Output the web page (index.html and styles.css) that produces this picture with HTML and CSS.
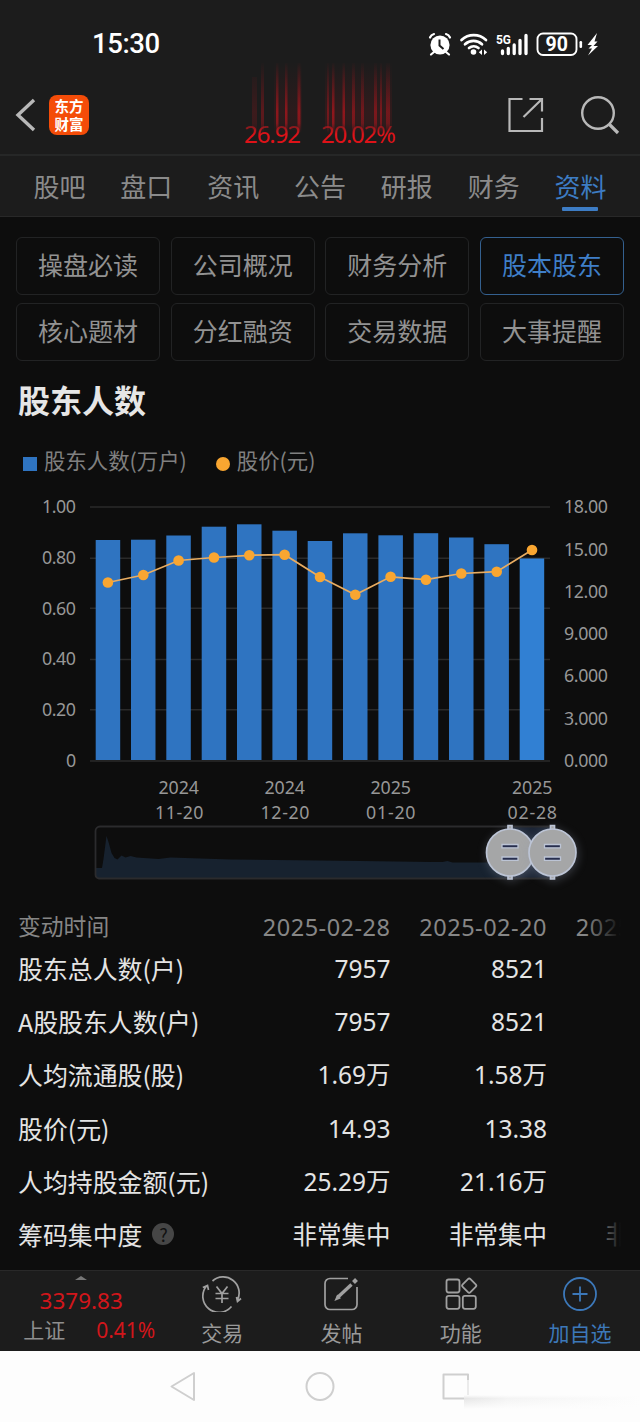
FILE: index.html
```html
<!DOCTYPE html>
<html lang="zh-CN">
<head>
    <meta charset="UTF-8">
    <meta name="viewport" content="width=device-width, initial-scale=1.0">
    <title>股东人数</title>
    <link rel="stylesheet" href="styles.css">
</head>
<body>
    <!-- Status bar -->
    <div class="status-bar">
        <span class="clock">15:30</span>
        <svg class="status-icons" width="172" height="28" viewBox="428 29 172 28">
            <g fill="#fff">
                <circle cx="440" cy="44" r="9.600"/>
                <path d="M434 51l-3 2.500M446 51l3 2.500M430 36.500a6 6 0 0 1 4-3.500M450 36.500a6 6 0 0 0-4-3.500" fill="none" stroke="#fff" stroke-width="2.200" stroke-linecap="round"/>
                <path d="M439.500 38.500v6l4 3.500" fill="none" stroke="#1c1c1c" stroke-width="2"/>
                <g fill="none" stroke="#fff" stroke-width="2.700" stroke-linecap="round">
                    <path d="M461.500 39a18 18 0 0 1 24.500 0"/>
                    <path d="M465 43.300a12.500 12.500 0 0 1 17 0"/>
                    <path d="M469 47a7.500 7.500 0 0 1 9.500 0"/>
                </g>
                <circle cx="473.500" cy="51" r="2.800"/>
                <path d="M482 48.500v5.500l-3.200-2.700zM484 48.500v5.500l3.200-2.700z"/>
                <text x="496" y="42.500" font-size="13.500" font-weight="bold" textLength="15" lengthAdjust="spacingAndGlyphs">5G</text>
                <g stroke="#fff" stroke-width="3.300" stroke-linecap="round">
                    <path d="M502.500 50v2.500M508.300 47.500v5M514.200 44v8.500M520 39.500v13M526 34.500v18"/>
                </g>
                <rect x="537.500" y="32.500" width="39" height="21.500" rx="5.500" fill="none" stroke="#fff" stroke-width="1.900"/>
                <text x="545.500" y="50" font-size="19.500" font-weight="bold" textLength="22.500">90</text>
                <rect x="579.500" y="40" width="2.600" height="7" rx="1.200"/>
                <path d="M597 32l-9.500 12h4.500l-3.500 3.500h3.500l-4 7 10-9.500h-4.500l4-4.500h-3z"/>
            </g>
        </svg>
    </div>

    <!-- Header -->
    <header class="header">
        <svg class="back" width="22" height="34" viewBox="0 0 22 34"><path d="M19 2 3 17 19 32" fill="none" stroke="#b8b8b8" stroke-width="3.400"/></svg>
        <div class="logo">东方<br>财富</div>
        <svg class="quote" width="160" height="94" viewBox="240 62 160 94">
            <defs>
                <linearGradient id="trail" gradientUnits="userSpaceOnUse" x1="0" y1="64" x2="0" y2="134">
                    <stop offset="0" stop-color="#c0141c" stop-opacity="0.020"/>
                    <stop offset="0.700" stop-color="#c0141c" stop-opacity="0.650"/>
                    <stop offset="0.860" stop-color="#c0141c" stop-opacity="0.600"/>
                    <stop offset="1" stop-color="#c0141c" stop-opacity="0"/>
                </linearGradient>
                <linearGradient id="digits" gradientUnits="userSpaceOnUse" x1="0" y1="125" x2="0" y2="135">
                    <stop offset="0" stop-color="#b51a20" stop-opacity="0.500"/>
                    <stop offset="1" stop-color="#df1218"/>
                </linearGradient>
            </defs>
            <g fill="url(#trail)">
                <rect x="252" y="78" width="5" height="55" opacity="0.300"/>
                <rect x="261" y="64" width="3" height="70" opacity="0.600"/>
                <rect x="276" y="64" width="2.500" height="70"/>
                <rect x="285" y="64" width="2.500" height="70"/>
                <rect x="297.500" y="64" width="3" height="70"/>
                <rect x="274" y="64" width="28" height="70" opacity="0.150"/>
                <rect x="327" y="64" width="2" height="70" opacity="0.700"/>
                <rect x="332" y="64" width="2.500" height="70"/>
                <rect x="342.500" y="64" width="2.500" height="70"/>
                <rect x="352" y="64" width="3" height="70" opacity="0.800"/>
                <rect x="361" y="64" width="3" height="70" opacity="0.700"/>
                <rect x="374" y="64" width="3" height="70" opacity="0.800"/>
                <rect x="380" y="64" width="2" height="70" opacity="0.800"/>
                <rect x="386" y="64" width="4" height="70" opacity="0.700"/>
                <rect x="325" y="64" width="67" height="70" opacity="0.200"/>
            </g>
            <g fill="url(#digits)" font-size="24">
                <text x="244" y="144" textLength="57">26.92</text>
                <text x="321" y="144" textLength="75">20.02%</text>
            </g>
        </svg>
        <svg class="share" width="36" height="36" viewBox="0 0 36 36"><path d="M14.500 2H1.500v32H34V21M21.500 2H34v12.500M34 2 15.500 20" fill="none" stroke="#b8b8b8" stroke-width="2.200"/></svg>
        <svg class="search" width="40" height="40" viewBox="0 0 40 40"><circle cx="18" cy="18" r="15.800" fill="none" stroke="#b8b8b8" stroke-width="2.400"/><path d="M29 29 38 38" stroke="#b8b8b8" stroke-width="3.200"/></svg>
    </header>

    <!-- Tabs -->
    <nav class="tabs">
        <a>股吧</a>
        <a>盘口</a>
        <a>资讯</a>
        <a>公告</a>
        <a>研报</a>
        <a>财务</a>
        <a class="active">资料</a>
    </nav>

    <main class="content">
        <div class="menu">
            <a>操盘必读</a>
            <a>公司概况</a>
            <a>财务分析</a>
            <a class="active">股本股东</a>
            <a>核心题材</a>
            <a>分红融资</a>
            <a>交易数据</a>
            <a>大事提醒</a>
        </div>

        <h1>股东人数</h1>

        <div class="legend">
            <i class="square"></i><span>股东人数(万户)</span>
            <i class="dot"></i><span>股价(元)</span>
        </div>

        <!-- Chart: bars, price line and range slider -->
        <svg class="chart" width="640" height="400" viewBox="0 490 640 400">
            <path d="M90 507H550M90 558.300H550M90 608.300H550M90 659.500H550M90 709.700H550M90 761H550" stroke="#2a2a2a" stroke-width="1.500"/>
            <g fill="#2f74c1">
                <rect x="95.700" y="540" width="24.500" height="220"/>
                <rect x="131" y="539.700" width="24.500" height="220.300"/>
                <rect x="166.300" y="535.500" width="24.500" height="224.500"/>
                <rect x="201.700" y="526.700" width="24.500" height="233.300"/>
                <rect x="237" y="524.300" width="24.500" height="235.700"/>
                <rect x="272.400" y="530.700" width="24.500" height="229.300"/>
                <rect x="307.700" y="541" width="24.500" height="219"/>
                <rect x="343" y="533.300" width="24.500" height="226.700"/>
                <rect x="378.400" y="535.300" width="24.500" height="224.700"/>
                <rect x="413.700" y="533.200" width="24.500" height="226.800"/>
                <rect x="449" y="537.500" width="24.500" height="222.500"/>
                <rect x="484.400" y="544.200" width="24.500" height="215.800"/>
                <rect x="519.700" y="558.500" width="24.500" height="201.500" fill="#3180d3"/>
            </g>
            <polyline points="107.900,582.500 143.300,575 178.600,560.500 214,557.500 249.300,555.300 284.600,554.700 320,577 355.300,594.800 390.600,576.800 426,579.700 461.300,573.500 496.700,571.700 532,550" fill="none" stroke="#e9ad62" stroke-width="1.700"/>
            <g fill="#f9a631">
                <circle cx="107.900" cy="582.500" r="5.300"/>
                <circle cx="143.300" cy="575" r="5.300"/>
                <circle cx="178.600" cy="560.500" r="5.300"/>
                <circle cx="214" cy="557.500" r="5.300"/>
                <circle cx="249.300" cy="555.300" r="5.300"/>
                <circle cx="284.600" cy="554.700" r="5.300"/>
                <circle cx="320" cy="577" r="5.300"/>
                <circle cx="355.300" cy="594.800" r="5.300"/>
                <circle cx="390.600" cy="576.800" r="5.300"/>
                <circle cx="426" cy="579.700" r="5.300"/>
                <circle cx="461.300" cy="573.500" r="5.300"/>
                <circle cx="496.700" cy="571.700" r="5.300"/>
                <circle cx="532" cy="550" r="5.300"/>
            </g>
            <g class="axis">
                <text x="42" y="513.300" textLength="34">1.00</text>
                <text x="42" y="564" textLength="34">0.80</text>
                <text x="42" y="614.500" textLength="34">0.60</text>
                <text x="42" y="665.300" textLength="34">0.40</text>
                <text x="42" y="716" textLength="34">0.20</text>
                <text x="66" y="767">0</text>
                <text x="564" y="513.300" textLength="44">18.00</text>
                <text x="564" y="555.500" textLength="44">15.00</text>
                <text x="564" y="597.500" textLength="44">12.00</text>
                <text x="564" y="640" textLength="44">9.000</text>
                <text x="564" y="682.300" textLength="44">6.000</text>
                <text x="564" y="724.500" textLength="44">3.000</text>
                <text x="564" y="767" textLength="44">0.000</text>
                <text x="158.500" y="793.500" textLength="40.500">2024</text>
                <text x="155" y="818.500" textLength="48.500">11-20</text>
                <text x="264.500" y="793.500" textLength="40.500">2024</text>
                <text x="260.500" y="818.500" textLength="49">12-20</text>
                <text x="370.500" y="793.500" textLength="40.500">2025</text>
                <text x="366" y="818.500" textLength="49.500">01-20</text>
                <text x="512" y="793.500" textLength="40.500">2025</text>
                <text x="507.500" y="818.500" textLength="49.500">02-28</text>
            </g>
            <path d="M96 878V868h6l1.500-9 3-23 2 6 3 11 3 5 3 1.500 4-4 4 2 5-1.500 6 1.500 22 1.500 12-1.500 60 2 130 1.500 71 1h11l5-1 5 1.500h57V878z" fill="#17222f"/>
            <rect x="510" y="827" width="42" height="51" fill="#1d2636"/>
            <path d="M552 878.500H99a4 4 0 0 1-3.500-4V831a4.500 4.500 0 0 1 4.500-4.500H552" fill="none" stroke="#2b2b2d" stroke-width="1.800"/>
            <g class="handle" fill="#a5a6a7" stroke="#bcc4d5" stroke-width="1.700">
                <path d="M508 825.500h4v53.500h-4z"/>
                <circle cx="510" cy="852.500" r="23.500"/>
                <path d="M502 844.500h16v3.300h-16zM502 857h16v3.300h-16z" fill="#272e4d" stroke-width="1.300"/>
            </g>
            <g class="handle" fill="#a5a6a7" stroke="#bcc4d5" stroke-width="1.700">
                <path d="M550.500 825.500h4v53.500h-4z"/>
                <circle cx="552.500" cy="852.500" r="23.500"/>
                <path d="M544.500 844.500h16v3.300h-16zM544.500 857h16v3.300h-16z" fill="#272e4d" stroke-width="1.300"/>
            </g>
        </svg>

        <!-- Holder table -->
        <div class="table">
            <div class="row head"><b>变动时间</b><span>2025-02-28</span><span>2025-02-20</span><span>2025-02-10</span></div>
            <div class="row"><b>股东总人数(户)</b><span>7957</span><span>8521</span></div>
            <div class="row"><b>A股股东人数(户)</b><span>7957</span><span>8521</span></div>
            <div class="row"><b>人均流通股(股)</b><span>1.69万</span><span>1.58万</span></div>
            <div class="row"><b>股价(元)</b><span>14.93</span><span>13.38</span></div>
            <div class="row"><b>人均持股金额(元)</b><span>25.29万</span><span>21.16万</span></div>
            <div class="row"><b>筹码集中度<i class="help">?</i></b><span>非常集中</span><span>非常集中</span><span>非常集中</span></div>
        </div>
    </main>

    <!-- Bottom bar -->
    <footer class="bottom-bar">
        <div class="index">
            <i class="arrow"></i>
            <strong>3379.83</strong>
            <div><span>上证</span><em>0.41%</em></div>
        </div>
        <a>
            <svg width="40" height="36" viewBox="0 0 40 36" fill="none" stroke="#a0a0a0" stroke-width="1.700">
                <path d="M10.500 5A16 16 0 0 1 35.500 24M29.500 30.500A16 16 0 0 1 4.500 10M0.800 11.500 5.500 9.500 6.500 14M39 22.500 35.500 25.500 34.500 21"/>
                <path d="M14.500 10.500 20 17.500 25.500 10.500M13.500 17.500h13M13.500 22.500h13M20 17.500v9.500"/>
            </svg>
            <span>交易</span>
        </a>
        <a>
            <svg width="36" height="36" viewBox="0 0 36 36" fill="none" stroke="#a0a0a0" stroke-width="1.700">
                <path d="M25 2.500H7A5 5 0 0 0 2 7.500v21a5 5 0 0 0 5 5h22a5 5 0 0 0 5-5V11"/>
                <path d="M14.500 21.500 28.500 8.500" stroke-width="3.400"/><path d="M30.500 6.500l3-3" stroke-width="4"/>
                <path d="M13 23.500l3.500-1.500-2-2z" fill="#a0a0a0"/>
            </svg>
            <span>发帖</span>
        </a>
        <a>
            <svg width="36" height="36" viewBox="0 0 36 36" fill="none" stroke="#a0a0a0" stroke-width="1.800">
                <rect x="3.500" y="3.500" width="13" height="13" rx="2.200"/><rect x="3.500" y="19.800" width="13" height="13" rx="2.200"/>
                <rect x="19.800" y="19.800" width="13" height="13" rx="2.200"/><rect x="20.700" y="4.200" width="11" height="11" rx="1.800" transform="rotate(45 26.200 9.700)"/>
            </svg>
            <span>功能</span>
        </a>
        <a class="add">
            <svg width="36" height="36" viewBox="0 0 36 36" fill="none" stroke="#3c78b9" stroke-width="1.800"><circle cx="18" cy="18" r="16"/><path d="M10.500 18h15M18 10.500v15"/></svg>
            <span>加自选</span>
        </a>
    </footer>

    <!-- System navigation -->
    <svg class="system-nav" width="640" height="71" viewBox="0 1351 640 71">
        <defs>
            <linearGradient id="edge" x1="0" y1="0" x2="1" y2="0"><stop offset="0" stop-color="#e6e6e6"/><stop offset="0.250" stop-color="#f4f4f4"/><stop offset="1" stop-color="#fdfdfd"/></linearGradient>
            <linearGradient id="down" x1="0" y1="0" x2="0" y2="1"><stop offset="0" stop-color="#fdfdfd"/><stop offset="0.250" stop-color="#fdfdfd" stop-opacity="0"/><stop offset="1" stop-color="#fdfdfd"/></linearGradient>
        </defs>
        <g fill="none" stroke="#cfcfcf" stroke-width="2" stroke-linejoin="round">
            <path d="M194 1373v27L171.500 1386.500z"/>
            <circle cx="320" cy="1386.500" r="13.500"/>
            <path d="M468 1380V1374.500H443.500V1398.500H464"/>
            <path d="M468 1380V1397" stroke="#ebebeb"/>
        </g>
        <rect x="464" y="1395" width="176" height="14" fill="url(#edge)"/>
        <rect x="464" y="1395" width="176" height="14" fill="url(#down)"/>
    </svg>
</body>
</html>
```

FILE: styles.css
```css
* {
    box-sizing: border-box;
}

body {
    margin: 0;
    width: 640px;
    height: 1422px;
    overflow: hidden;
    background: #0d0d0d;
    color: #a0a0a0;
    font-family: "Noto Sans", "Noto Sans CJK SC", sans-serif;
}

svg {
    display: block;
    flex: none;
}

/* Status bar */
.status-bar {
    height: 76px;
    padding: 11px 40px 0 92px;
    display: flex;
    align-items: center;
    justify-content: space-between;
    background: #1c1c1c;
}

.clock {
    color: #fff;
    font-family: Roboto, sans-serif;
    font-size: 27.5px;
    font-weight: 500;
    line-height: 32px;
    letter-spacing: -0.4px;
}

.status-icons {
    font-family: Roboto, sans-serif;
}

/* Header */
.header {
    height: 80px;
    padding: 0 20px 0 15px;
    display: flex;
    align-items: center;
    background: #1c1c1c;
    border-bottom: 2px solid #262727;
}

.logo {
    width: 40px;
    height: 40px;
    margin-left: 12px;
    padding-top: 2px;
    border-radius: 8px;
    background: #f44c08;
    color: #fff;
    text-align: center;
    font-family: "Noto Sans CJK SC", sans-serif;
    font-size: 14.5px;
    font-weight: bold;
    line-height: 17.5px;
}

.quote {
    margin: -14px 0 0 151px;
}

.share {
    margin-left: 108px;
}

.search {
    margin-left: auto;
}

/* Tabs */
.tabs {
    height: 61px;
    padding: 0 16px;
    display: grid;
    grid-template-columns: repeat(7, 1fr);
    background: #1c1c1c;
    border-bottom: 1px solid #282828;
}

.tabs a {
    font-family: "Noto Sans CJK SC", sans-serif;
    font-size: 26px;
    line-height: 59px;
    text-align: center;
    color: #8b8b8b;
    position: relative;
}

.tabs .active {
    color: #3d7cc4;
}

.tabs .active::after {
    content: "";
    position: absolute;
    left: 25px;
    bottom: 5px;
    width: 36px;
    height: 4px;
    border-radius: 1px;
    background: #3d7cc4;
}

/* Content */
.content {
    height: 1053px;
    padding-top: 20px;
    overflow: hidden;
}

.menu {
    padding: 0 16px;
    display: grid;
    grid-template-columns: repeat(4, 1fr);
    gap: 8px 10.5px;
}

.menu a {
    height: 58px;
    border: 1.5px solid #222324;
    border-radius: 6px;
    font-family: "Noto Sans CJK SC", sans-serif;
    font-size: 25px;
    line-height: 52px;
    text-align: center;
    color: #929292;
}

.menu .active {
    color: #3f7fc8;
    border-color: #34608f;
}

h1 {
    margin: 14px 0 0 18px;
    font-family: "Noto Sans CJK SC", sans-serif;
    font-size: 32px;
    line-height: 48px;
    color: #e6e6e6;
}

.legend {
    height: 30px;
    margin: 22px 0 15px 23px;
    display: flex;
    align-items: center;
    font-family: "Noto Sans CJK SC", sans-serif;
    font-size: 21.4px;
    line-height: 30px;
    color: #808080;
}

.legend i {
    width: 14px;
    height: 14px;
    margin: 8px 7px 0 0;
    background: #2f74c1;
}

.legend .dot {
    margin-left: 29px;
    border-radius: 50%;
    background: #f9a631;
}

.axis {
    fill: #979797;
    font-size: 17.8px;
}

.handle {
    filter: drop-shadow(1px 2px 5px rgba(140, 150, 170, 0.35));
}

/* Table */
.table {
    position: relative;
    margin-top: 20px;
    color: #e4e4e4;
}

/* fades out the column that scrolls off the right edge */
.table::after {
    content: "";
    position: absolute;
    top: 0;
    right: 0;
    width: 55px;
    height: 100%;
    background: linear-gradient(to right, rgba(13, 13, 13, 0), #0d0d0d 36px);
}

.row {
    height: 53.3px;
    padding-left: 18px;
    display: flex;
    align-items: center;
    font-size: 24.5px;
    line-height: 36px;
    white-space: nowrap;
}

.row.head {
    height: 31px;
    color: #868686;
}

.row b {
    width: 216px;
    flex: none;
    display: flex;
    align-items: center;
    font-family: "Noto Sans CJK SC", sans-serif;
    font-size: 24.9px;
    font-weight: normal;
}

.row.head b {
    font-size: 22.8px;
}

.row span {
    width: 156.5px;
    padding-top: 2px;
    flex: none;
    text-align: right;
}

.row.head span {
    font-size: 23.5px;
    letter-spacing: 0.5px;
}

.help {
    width: 22px;
    height: 22px;
    margin-left: 10px;
    border-radius: 50%;
    background: #464646;
    color: #111;
    font-size: 18px;
    font-style: normal;
    line-height: 22px;
    text-align: center;
}

/* Bottom bar */
.bottom-bar {
    height: 81px;
    display: grid;
    grid-template-columns: 162.5px repeat(4, 119.3px);
    background: #1c1c1c;
    border-top: 1px solid #292929;
}

.bottom-bar a {
    padding-top: 5px;
    display: flex;
    flex-direction: column;
    align-items: center;
    font-family: "Noto Sans CJK SC", sans-serif;
    font-size: 21px;
    line-height: 30px;
    color: #999;
}

.bottom-bar a span {
    margin-top: 5px;
}

.bottom-bar .add {
    color: #3c78b9;
}

.index {
    padding-top: 5px;
    display: flex;
    flex-direction: column;
    align-items: center;
}

.arrow {
    border: 6px solid transparent;
    border-top: 0;
    border-bottom: 4px solid #777;
}

.index strong {
    margin-top: 7px;
    font-size: 22.5px;
    font-weight: normal;
    line-height: 28px;
    color: #d2161b;
}

.index div {
    width: 132px;
    margin: 1px 0 0 16px;
    display: flex;
    justify-content: space-between;
    font-size: 21px;
    line-height: 28px;
    color: #8e8e8e;
}

.index em {
    font-style: normal;
    color: #d2161b;
}

.system-nav {
    background: #fdfdfd;
}
```
